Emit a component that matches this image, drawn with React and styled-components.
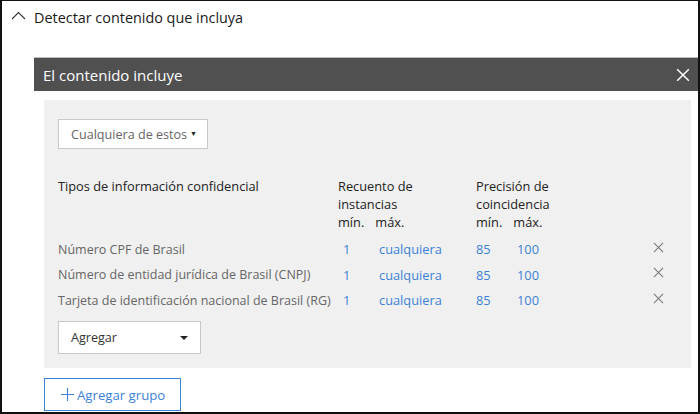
import React from "react";
import styled, { createGlobalStyle } from "styled-components";

const GlobalStyle = createGlobalStyle`
  html, body {
    margin: 0;
    padding: 0;
    background: #fff;
  }
  body {
    font-family: "Open Sans", "Noto Sans", "Liberation Sans", sans-serif;
  }
`;

const rows = [
  { label: "Número CPF de Brasil", min: "1", max: "cualquiera", pmin: "85", pmax: "100" },
  { label: "Número de entidad jurídica de Brasil (CNPJ)", min: "1", max: "cualquiera", pmin: "85", pmax: "100" },
  { label: "Tarjeta de identificación nacional de Brasil (RG)", min: "1", max: "cualquiera", pmin: "85", pmax: "100" },
];

const ChevronUp = () => (
  <svg width="15" height="9" viewBox="0 0 15 9">
    <path d="M1 8 L7.5 1.5 L14 8" fill="none" stroke="#333" strokeWidth="1.1" />
  </svg>
);

const Cross = ({ size = 12, color = "#777", width = 1.2 }) => (
  <svg width={size} height={size} viewBox="0 0 12 12">
    <path d="M1 1 L11 11 M11 1 L1 11" stroke={color} strokeWidth={width} fill="none" />
  </svg>
);

const Plus = () => (
  <svg width="13" height="13" viewBox="0 0 13 13">
    <path d="M6.5 0 V13 M0 6.5 H13" stroke="#3b82d6" strokeWidth="1.1" fill="none" />
  </svg>
);

const App = () => {
  return (
    <>
      <GlobalStyle />
      <Frame>
        <SectionHeader>
          <ChevronUp />
          <SectionTitle>Detectar contenido que incluya</SectionTitle>
        </SectionHeader>
        <Group>
          <GroupBar>
            <GroupTitle>El contenido incluye</GroupTitle>
            <CloseButton>
              <Cross size={14} color="#fff" width={1.3} />
            </CloseButton>
          </GroupBar>
          <Panel>
            <Select width="150px">
              <span>Cualquiera de estos</span>
              <SmallCaret>▼</SmallCaret>
            </Select>
            <Table>
              <HeadCell>Tipos de información confidencial</HeadCell>
              <HeadGroup>
                <span>Recuento de</span>
                <span>instancias</span>
                <SubHead>
                  <span>mín.</span>
                  <span>máx.</span>
                </SubHead>
              </HeadGroup>
              <HeadGroup>
                <span>Precisión de</span>
                <span>coincidencia</span>
                <SubHead>
                  <span>mín.</span>
                  <span>máx.</span>
                </SubHead>
              </HeadGroup>
              <div />
              {rows.map((r, i) => (
                <React.Fragment key={i}>
                  <Label>{r.label}</Label>
                  <Pair>
                    <Link pad="5px" w="36px">{r.min}</Link>
                    <Link pad="0">{r.max}</Link>
                  </Pair>
                  <Pair>
                    <Link pad="0" w="41px">{r.pmin}</Link>
                    <Link pad="0">{r.pmax}</Link>
                  </Pair>
                  <RemoveCell>
                    <Cross size={11} color="#777" width={1.1} />
                  </RemoveCell>
                </React.Fragment>
              ))}
            </Table>
            <Select width="143px" dark>
              <span>Agregar</span>
              <Caret />
            </Select>
          </Panel>
          <AddGroup>
            <Plus />
            <span>Agregar grupo</span>
          </AddGroup>
        </Group>
      </Frame>
    </>
  );
};

const Frame = styled.div`
  box-sizing: border-box;
  width: 700px;
  height: 414px;
  border: solid #111;
  border-width: 1px 2px 2px 2px;
  overflow: hidden;
  display: flex;
  flex-direction: column;
  & > * {
    flex-shrink: 0;
  }
`;

const SectionHeader = styled.div`
  display: flex;
  align-items: center;
  gap: 8px;
  height: 33px;
  padding: 0 0 0 9px;
  svg {
    margin-top: -5px;
  }
`;

const SectionTitle = styled.div`
  font-size: 14.4px;
  color: #1a1a1a;
`;

const Group = styled.div`
  display: flex;
  flex-direction: column;
  margin: 23px 0 0 32px;
`;

const GroupBar = styled.div`
  box-sizing: border-box;
  height: 34px;
  background: #505050;
  border-top: 1px solid #bdbdbd;
  display: flex;
  align-items: center;
  justify-content: space-between;
  padding: 0 8px 0 9px;
`;

const GroupTitle = styled.div`
  color: #fff;
  font-size: 15px;
`;

const CloseButton = styled.div`
  display: flex;
  align-items: center;
`;

const Panel = styled.div`
  box-sizing: border-box;
  margin: 9px 7px 0 10px;
  background: #f0f0f0;
  padding: 19px 14px 14px 14px;
  display: flex;
  flex-direction: column;
`;

const Select = styled.div`
  box-sizing: border-box;
  width: ${(p) => p.width};
  height: ${(p) => (p.dark ? "33px" : "30px")};
  background: #fff;
  border: 1px solid #c8c8c8;
  display: flex;
  align-items: center;
  justify-content: space-between;
  padding: 0 10px 0 12px;
  font-size: 12.6px;
  white-space: nowrap;
  color: ${(p) => (p.dark ? "#333" : "#666")};
`;

const SmallCaret = styled.span`
  font-size: 7px;
  color: #222;
  margin-top: -2px;
`;

const Caret = styled.span`
  width: 0;
  height: 0;
  margin-right: 2px;
  border-left: 4px solid transparent;
  border-right: 4px solid transparent;
  border-top: 4px solid #222;
`;

const Table = styled.div`
  display: grid;
  grid-template-columns: 280px 138px 1fr 24px;
  grid-template-rows: 59.5px;
  grid-auto-rows: 25.5px;
  align-items: center;
  margin: 28px 0 8px 0;
  font-size: 12.8px;
  & > :nth-child(-n + 4) {
    align-self: start;
  }
`;

const HeadCell = styled.div`
  color: #222;
  line-height: 18px;
`;

const HeadGroup = styled.div`
  display: flex;
  flex-direction: column;
  color: #222;
  line-height: 18px;
`;

const SubHead = styled.div`
  display: flex;
  gap: 11px;
  line-height: 19px;
`;

const Label = styled.div`
  color: #666;
  font-size: 12.5px;
  white-space: nowrap;
`;

const Pair = styled.div`
  display: flex;
`;

const Link = styled.span`
  color: #3b82d6;
  padding-left: ${(p) => p.pad};
  width: ${(p) => p.w || "auto"};
`;

const RemoveCell = styled.div`
  display: flex;
  align-items: center;
  margin-top: -4px;
`;

const AddGroup = styled.div`
  box-sizing: border-box;
  margin: 10px 0 0 10px;
  width: 137px;
  height: 33px;
  border: 1px solid #3b82d6;
  display: flex;
  align-items: center;
  gap: 3px;
  padding-left: 16px;
  color: #3b82d6;
  font-size: 13.2px;
`;

export default App;
